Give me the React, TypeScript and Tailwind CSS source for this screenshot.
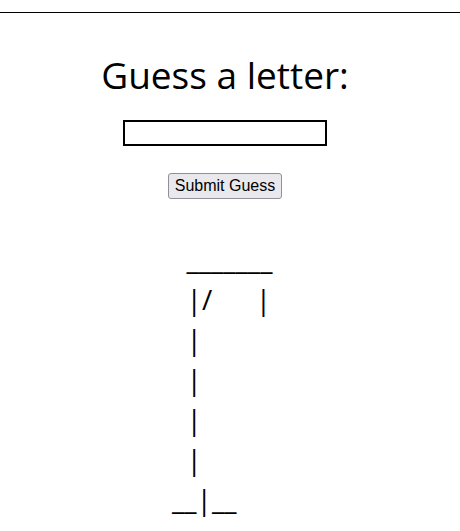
const lines = [
  "  _______",
  "  |/      |",
  "  |",
  "  |",
  "  |",
  "  |",
  "__|__",
];

export default function App() {
  return (
    <div className="min-h-screen bg-white text-black font-['Open_Sans',sans-serif]">
      <div className="pt-3">
        <hr className="border-t border-black" />
      </div>
      <div className="flex flex-col items-center pr-[10px]">
        <h1 className="mt-[36px] text-[37px] leading-[52px]">Guess a letter:</h1>
        <input
          type="text"
          className="mt-[19px] w-[204px] h-[26px] border-2 border-black bg-white"
        />
        <button className="mt-[27px] h-[26px] px-[6px] rounded-[3px] border border-[#8f8f9d] bg-[#e9e9ed] text-[16px] font-['Liberation_Sans',sans-serif]">
          Submit Guess
        </button>
        <div className="mt-[40px] ml-[8px] w-[114px] text-[28px]">
          {lines.map((line, i) => (
            <div key={i} className="h-[40px] leading-[40px] whitespace-pre">
              {line}
            </div>
          ))}
        </div>
      </div>
    </div>
  );
}
